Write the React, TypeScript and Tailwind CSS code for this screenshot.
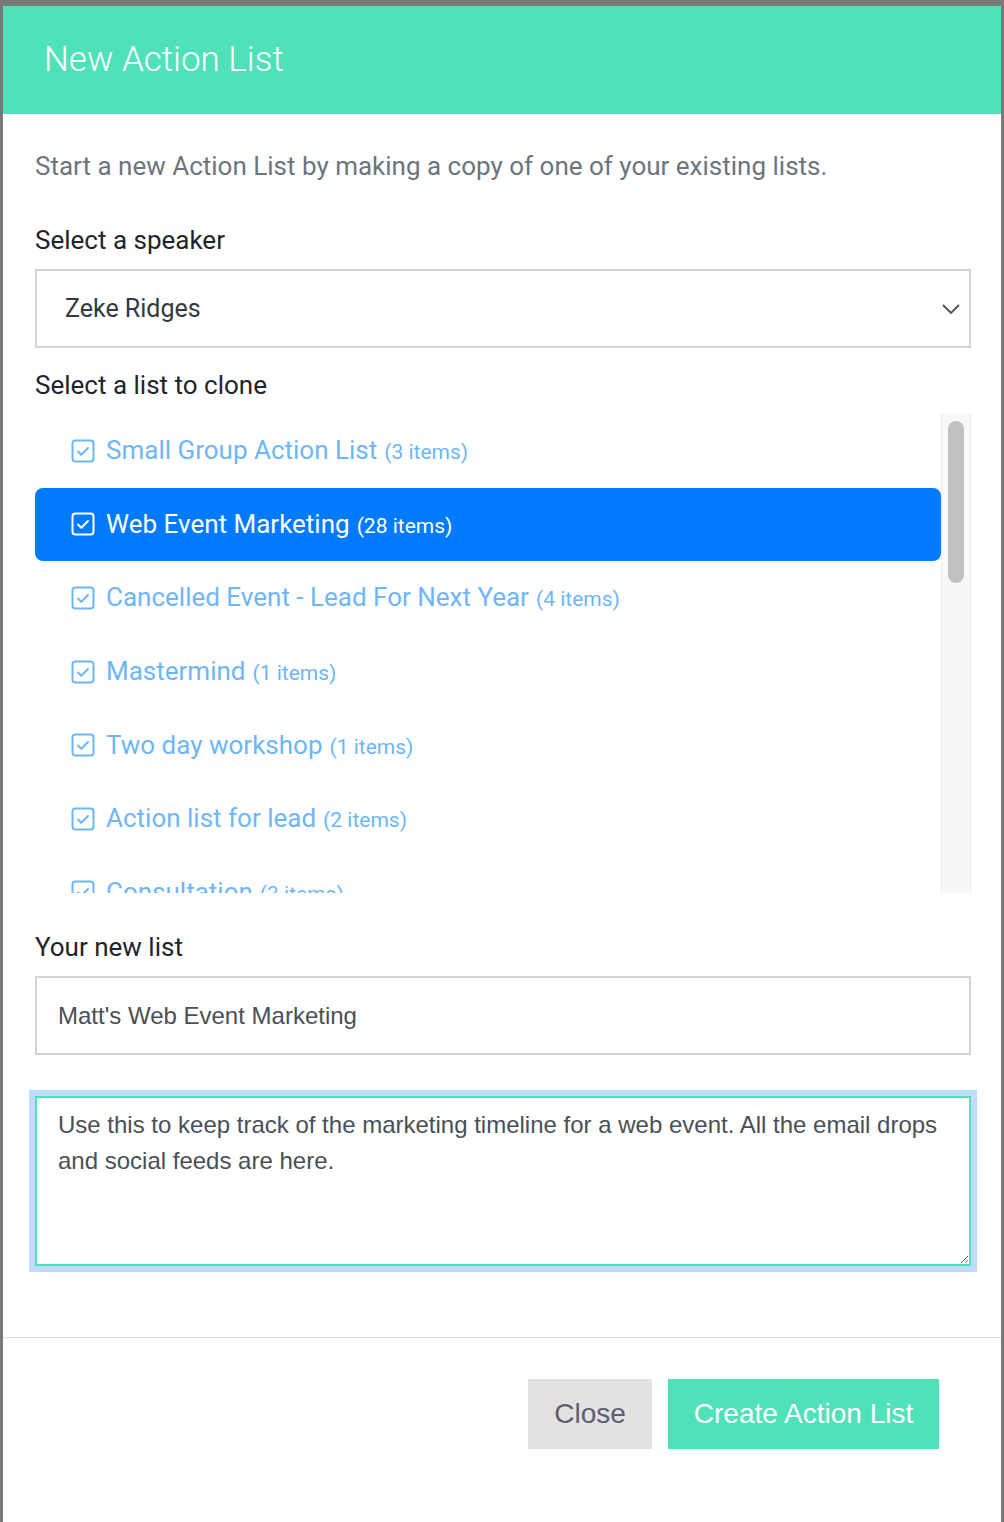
import React from "react";

const items = [
  { name: "Small Group Action List", count: 3 },
  { name: "Web Event Marketing", count: 28, selected: true },
  { name: "Cancelled Event - Lead For Next Year", count: 4 },
  { name: "Mastermind", count: 1 },
  { name: "Two day workshop", count: 1 },
  { name: "Action list for lead", count: 2 },
  { name: "Consultation", count: 3 },
];

function CheckIcon({ color }: { color: string }) {
  return (
    <svg width="24" height="24" viewBox="0 0 24 24" fill="none" className="shrink-0">
      <rect x="1.5" y="1.5" width="21" height="21" rx="3" stroke={color} strokeWidth="2" />
      <path d="M7 12.5l3.3 3.3L17 9" stroke={color} strokeWidth="2" strokeLinecap="round" strokeLinejoin="round" />
    </svg>
  );
}

export default function App() {
  return (
    <div className="min-h-[1522px] bg-[#797979] pt-[6px] pl-[3px] pr-[3px]">
      <div className="bg-white min-h-[1516px] flex flex-col">
        <div className="h-[108px] bg-[#4fe2b9] flex items-center pl-[41px]">
          <h1 className="text-white text-[35px] font-light font-['Roboto',sans-serif] leading-none -mt-[2px]">
            New Action List
          </h1>
        </div>

        <div className="pl-[32px] pr-[30px] pt-[34px] pb-[71px] font-['Roboto',sans-serif]">
          <p className="text-[26px] leading-[36px] text-[#6c757d]">
            Start a new Action List by making a copy of one of your existing lists.
          </p>

          <div className="mt-[38px] text-[26px] leading-[36px] text-[#212529]">Select a speaker</div>
          <div className="mt-[11px] h-[79px] border-2 border-[#ced4da] flex items-center justify-between pl-[28px] pr-[8px]">
            <span className="text-[25px] text-[#343a40]">Zeke Ridges</span>
            <svg width="20" height="12" viewBox="0 0 20 12" fill="none">
              <path d="M2 2l8 8 8-8" stroke="#495057" strokeWidth="1.8" />
            </svg>
          </div>

          <div className="mt-[19px] text-[26px] leading-[36px] text-[#212529]">Select a list to clone</div>
          <div className="mt-[11px] h-[479px] flex overflow-hidden">
            <div className="w-[906px] shrink-0 overflow-hidden">
              {items.map((it) => (
                <div
                  key={it.name}
                  className={
                    "h-[73.6px] flex items-center pl-[36px] gap-[11px] " +
                    (it.selected ? "bg-[#007bff] rounded-[8px] text-white" : "text-[#6fb6f8]")
                  }
                >
                  <CheckIcon color={it.selected ? "#ffffff" : "#6fb6f8"} />
                  <span className="flex items-baseline gap-[7px] whitespace-nowrap">
                    <span className="text-[26px]">{it.name}</span>
                    <span className="text-[21px]">({it.count} items)</span>
                  </span>
                </div>
              ))}
            </div>
            <div className="flex-1 bg-[#f8f8f8] border-l border-r border-[#ececec] pt-[7px] flex justify-center">
              <div className="w-[16px] h-[162px] rounded-full bg-[#c1c1c1]" />
            </div>
          </div>

          <div className="mt-[36px] text-[26px] leading-[36px] text-[#212529]">Your new list</div>
          <div className="mt-[11px] h-[79px] border-2 border-[#ced4da] flex items-center pl-[21px]">
            <span className="text-[24px] text-[#495057] font-['Liberation_Sans',Arial,sans-serif]">
              Matt's Web Event Marketing
            </span>
          </div>

          <textarea
            className="mt-[41px] block w-full h-[170px] border-2 border-[#4fe2b9] shadow-[0_0_0_6px_#bfdcfd] outline-none pl-[21px] pr-[20px] pt-[9px] text-[24px] leading-[36px] text-[#495057] font-['Liberation_Sans',Arial,sans-serif]"
            defaultValue="Use this to keep track of the marketing timeline for a web event. All the email drops and social feeds are here."
          />
        </div>

        <div className="border-t border-[#dee2e6] pt-[41px] pr-[62px] flex justify-end gap-[16px] font-['Liberation_Sans',Arial,sans-serif]">
          <button className="w-[124px] h-[70px] bg-[#e4e1e1] text-[#5b5f73] text-[28px]">Close</button>
          <button className="w-[271px] h-[70px] bg-[#4fe2b9] text-white text-[28px]">Create Action List</button>
        </div>
      </div>
    </div>
  );
}
